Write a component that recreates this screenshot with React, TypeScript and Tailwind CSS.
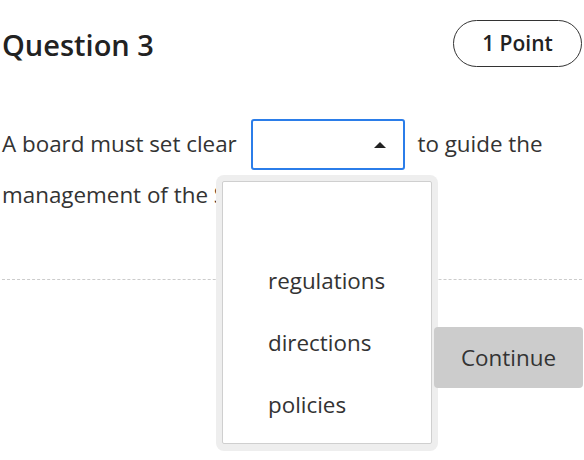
import React from "react";

export default function App() {
  return (
    <div
      className="relative w-[584px] h-[460px] bg-white overflow-hidden px-[2px] text-[#333]"
      style={{ fontFamily: '"Open Sans", "Liberation Sans", sans-serif' }}
    >
      <div className="flex items-center justify-between pt-[20px]">
        <h2 className="text-[29px] font-semibold leading-none text-[#222] mt-[2px]">Question 3</h2>
        <div className="flex items-center justify-center w-[129px] h-[47px] rounded-full border border-[#333] text-[21px] font-semibold text-[#222]">
          1 Point
        </div>
      </div>

      <p className="mt-[52px] text-[22.4px] leading-[50px]">
        A board must set clear{" "}
        <span className="inline-flex align-top items-center justify-end w-[154px] h-[51px] ml-[8px] mr-[7px] border-2 border-[#2b7de9] rounded-[3px] pr-[17px]">
          <svg width="12" height="6" viewBox="0 0 12 6">
            <path d="M0 6 L6 0 L12 6 Z" fill="#222" />
          </svg>
        </span>{" "}
        to guide the management of the Society.
      </p>

      <div className="mt-[59px] border-t border-dashed border-[#ccc]" />

      <div className="flex justify-end mt-[47px]">
        <button className="relative z-10 w-[149px] h-[61px] bg-[#cccccc] rounded-[4px] text-[22.4px] text-[#333] mr-[-1px]">
          Continue
        </button>
      </div>

      <div className="absolute left-[216px] top-[175px] w-[222px] h-[276px] bg-[#eeeeee] rounded-[8px] pt-[6px] pl-[6px] pr-[6px] pb-[7px]">
        <div className="h-full bg-white border border-[#cfcfcf] rounded-[2px] pt-[6px] text-[22.4px]">
          <div className="h-[62px]" />
          <div className="h-[62px] flex items-center pl-[45px]">regulations</div>
          <div className="h-[62px] flex items-center pl-[45px]">directions</div>
          <div className="h-[62px] flex items-center pl-[45px]">policies</div>
        </div>
      </div>
    </div>
  );
}
